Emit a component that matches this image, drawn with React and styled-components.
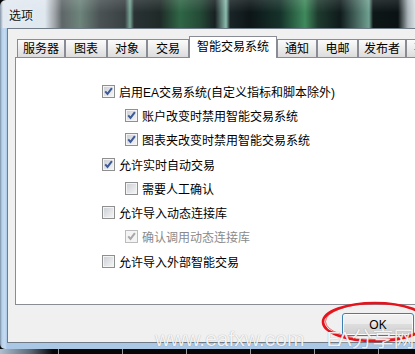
import React from "react";
import styled, { createGlobalStyle } from "styled-components";

const GlobalStyle = createGlobalStyle`
  html, body {
    margin: 0;
    padding: 0;
    background: #050708;
  }
  body {
    font-family: "Liberation Sans", "Noto Sans CJK SC", sans-serif;
    font-size: 12px;
  }
`;

const Screen = styled.div`
  position: relative;
  width: 415px;
  height: 354px;
  overflow: hidden;
  background: #050708;
`;

const Window = styled.div`
  width: 430px;
  height: 349px;
  display: flex;
  flex-direction: column;
  border-radius: 6px 0 0 5px;
  overflow: hidden;
`;

const TitleBar = styled.div`
  flex: none;
  height: 28px;
  display: flex;
  align-items: center;
  padding-left: 9px;
  background:
    linear-gradient(to bottom, rgba(255, 255, 255, 0.12), rgba(255, 255, 255, 0) 45%),
    linear-gradient(
      to right,
      #8596a8 0px,
      #e2e9f0 3px,
      #dfe7ef 45px,
      #9aa0a3 55px,
      #5f6668 62px,
      #6d857b 80px,
      #4a5254 100px,
      #3a4143 125px,
      #78a696 130px,
      #2a3234 134px,
      #1f2a28 160px,
      #2f6646 180px,
      #244a36 200px,
      #182022 215px,
      #8bbcad 226px,
      #1a2426 230px,
      #0d1517 250px,
      #15322a 280px,
      #3f8a5c 305px,
      #1e3a2e 318px,
      #0f1a1b 340px,
      #6fa090 369px,
      #0e1718 373px,
      #0a1213 398px,
      #aab5ba 408px,
      #d8dee2 415px
    );
`;

const Title = styled.span`
  font-size: 12px;
  color: #111;
  text-shadow: 0 0 5px rgba(255, 255, 255, 0.9);
`;

const Frame = styled.div`
  flex: 1;
  display: flex;
  padding: 0 0 6px 7px;
  background: linear-gradient(to right, #7d8fa3 0, #b8d2ec 2px, #c4dbf1 5px, #aac7e6 7px);
`;

const Client = styled.div`
  box-sizing: border-box;
  width: 421px;
  height: 315px;
  display: flex;
  flex-direction: column;
  border: 1px solid #6f7b86;
  border-right: none;
  background: #f0f0f0;
  padding: 7px 7px 0 7px;
`;

const TabStrip = styled.div`
  display: flex;
  align-items: flex-end;
  height: 21px;
  padding-left: 2px;
`;

const Tab = styled.div`
  box-sizing: border-box;
  flex: none;
  width: ${(p) => p.$w}px;
  height: ${(p) => (p.$active ? 22 : 18)}px;
  margin-bottom: ${(p) => (p.$active ? -1 : 0)}px;
  padding-bottom: ${(p) => (p.$active ? 2 : 0)}px;
  border: 1px solid #898c95;
  border-bottom: none;
  background: ${(p) =>
    p.$active ? "#fff" : "linear-gradient(#fbfbfb, #ececec 50%, #dcdcdc)"};
  display: flex;
  align-items: center;
  justify-content: center;
  font-size: 12px;
  line-height: 1;
  color: #000;
  white-space: nowrap;
  position: relative;
  z-index: ${(p) => (p.$active ? 1 : 0)};
`;

const Panel = styled.div`
  box-sizing: border-box;
  height: 248px;
  border: 1px solid #898c95;
  background: #fff;
  padding: 21px 0 0 86px;
  display: flex;
  flex-direction: column;
`;

const Row = styled.label`
  display: flex;
  align-items: center;
  gap: 4px;
  height: 24.3px;
  padding-left: ${(p) => p.$level * 23}px;
  font-size: 12px;
  color: ${(p) => (p.$disabled ? "#8a8a8a" : "#000")};
  white-space: nowrap;
`;

const Box = styled.span`
  box-sizing: border-box;
  flex: none;
  width: 13px;
  height: 13px;
  border: 1px solid ${(p) => (p.$disabled ? "#bcbcbc" : "#8e8f8f")};
  box-shadow: inset 0 0 0 1px #f4f4f4;
  background: ${(p) =>
    p.$disabled ? "#f4f4f4" : "linear-gradient(135deg, #c9cdd3, #f7f7f7)"};
  display: flex;
  align-items: center;
  justify-content: center;
`;

const ButtonRow = styled.div`
  display: flex;
  justify-content: flex-end;
  margin-top: 8px;
  padding-right: 7px;
`;

const Button = styled.button`
  box-sizing: border-box;
  width: 72px;
  height: 23px;
  border: 1px solid #3c7fb1;
  border-radius: 3px;
  background: linear-gradient(#f2f2f2 0, #ebebeb 50%, #dddddd 50%, #cfcfcf 100%);
  box-shadow: inset 0 0 0 1px #fcfcfc;
  font-family: "Liberation Sans", "Noto Sans CJK SC", sans-serif;
  font-size: 12px;
  color: #000;
  padding: 0;
`;

const ChartStrip = styled.div`
  flex: none;
  height: 5px;
  display: flex;
  gap: 63px;
  padding-left: 58px;
  background: linear-gradient(to right, #aebfd0 0, #5d6a76 30px, #050607 53px);
`;

const Tick = styled.span`
  width: 1px;
  height: 5px;
  background: #9a9a9a;
`;

const Annotation = styled.svg`
  position: absolute;
  left: 318px;
  top: 298px;
  width: 115px;
  height: 52px;
  pointer-events: none;
`;

const Watermark = styled.div`
  position: absolute;
  left: 155px;
  top: 328px;
  display: flex;
  gap: 22px;
  font-family: "Liberation Sans", "Noto Sans CJK SC", sans-serif;
  font-size: 21px;
  line-height: 21px;
  color: rgba(255, 255, 255, 0.9);
  text-shadow: 0 0 1px rgba(0, 0, 0, 0.35);
  white-space: nowrap;
  pointer-events: none;
`;

const Narrow = styled.span`
  letter-spacing: -3px;
  margin-right: 3px;
`;

const tabs = [
  { label: "服务器", w: 48 },
  { label: "图表", w: 42 },
  { label: "对象", w: 40 },
  { label: "交易", w: 42 },
  { label: "智能交易系统", w: 88, active: true },
  { label: "通知", w: 40 },
  { label: "电邮", w: 41 },
  { label: "发布者", w: 48 },
  { label: "事件", w: 40 },
];

const options = [
  { text: "启用EA交易系统(自定义指标和脚本除外)", level: 0, checked: true },
  { text: "账户改变时禁用智能交易系统", level: 1, checked: true },
  { text: "图表夹改变时禁用智能交易系统", level: 1, checked: true },
  { text: "允许实时自动交易", level: 0, checked: true },
  { text: "需要人工确认", level: 1, checked: false },
  { text: "允许导入动态连接库", level: 0, checked: false },
  { text: "确认调用动态连接库", level: 1, checked: true, disabled: true },
  { text: "允许导入外部智能交易", level: 0, checked: false },
];

const Checkbox = ({ checked, disabled }) => (
  <Box $disabled={disabled}>
    {checked && (
      <svg width="11" height="11" viewBox="0 0 11 11">
        <path
          d="M2.2 5.4 L4.5 7.9 L8.9 2.2"
          fill="none"
          stroke={disabled ? "#a8a8a8" : "#3d5a98"}
          strokeWidth="2"
        />
      </svg>
    )}
  </Box>
);

const App = () => {
  return (
    <Screen>
      <GlobalStyle />
      <Window>
        <TitleBar>
          <Title>选项</Title>
        </TitleBar>
        <Frame>
          <Client>
            <TabStrip>
              {tabs.map((t) => (
                <Tab key={t.label} $w={t.w} $active={t.active}>
                  {t.label}
                </Tab>
              ))}
            </TabStrip>
            <Panel>
              {options.map((o) => (
                <Row key={o.text} $level={o.level} $disabled={o.disabled}>
                  <Checkbox checked={o.checked} disabled={o.disabled} />
                  {o.text}
                </Row>
              ))}
            </Panel>
            <ButtonRow>
              <Button>OK</Button>
            </ButtonRow>
          </Client>
        </Frame>
      </Window>
      <ChartStrip>
        {[0, 1, 2, 3, 4, 5].map((i) => (
          <Tick key={i} />
        ))}
      </ChartStrip>
      <Annotation viewBox="0 0 115 52">
        <ellipse cx="57" cy="24" rx="52" ry="19" fill="none" stroke="#e5141c" strokeWidth="2.6" />
        <ellipse cx="58" cy="23.5" rx="50.5" ry="18" fill="none" stroke="#e5141c" strokeWidth="1" opacity="0.6" />
      </Annotation>
      <Watermark>
        <span>www.eafxw.com</span>
        <span>
          <Narrow>EA</Narrow>分享网
        </span>
      </Watermark>
    </Screen>
  );
};

export default App;
